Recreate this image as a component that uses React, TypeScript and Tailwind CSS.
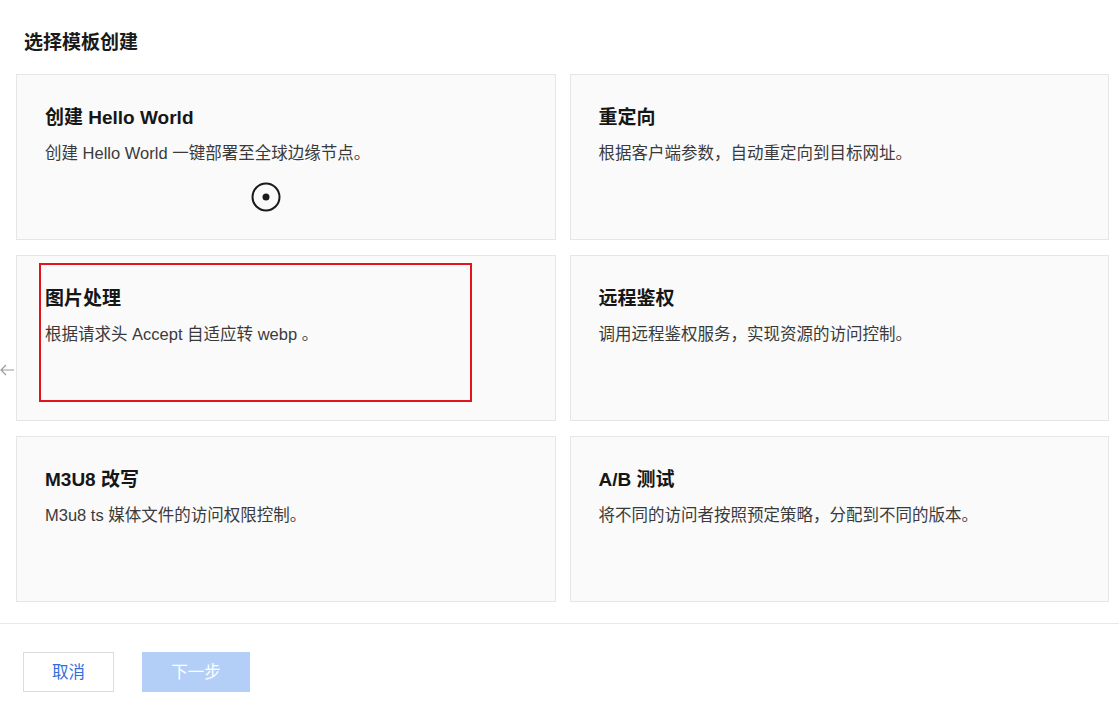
const templates = [
  { title: "创建 Hello World", desc: "创建 Hello World 一键部署至全球边缘节点。" },
  { title: "重定向", desc: "根据客户端参数，自动重定向到目标网址。" },
  { title: "图片处理", desc: "根据请求头 Accept 自适应转 webp 。" },
  { title: "远程鉴权", desc: "调用远程鉴权服务，实现资源的访问控制。" },
  { title: "M3U8 改写", desc: "M3u8 ts 媒体文件的访问权限控制。" },
  { title: "A/B 测试", desc: "将不同的访问者按照预定策略，分配到不同的版本。" },
];

function CursorRing() {
  return (
    <svg className="absolute left-[234px] top-[107px]" width="30" height="30" viewBox="0 0 30 30">
      <circle cx="15" cy="15" r="13.5" fill="none" stroke="#1a1a1a" strokeWidth="2" />
      <circle cx="15" cy="15" r="3.5" fill="#1a1a1a" />
    </svg>
  );
}

export default function App() {
  return (
    <div
      className="relative w-[1119px] h-[710px] overflow-hidden bg-white text-[#1f1f1f]"
      style={{ fontFamily: '"Liberation Sans", "Noto Sans CJK SC", sans-serif' }}
    >
      {/* drag arrow at the left edge */}
      <svg className="absolute left-0 top-[362px]" width="16" height="16" viewBox="0 0 16 16">
        <path d="M14 8H1M6 3L1 8l5 5" fill="none" stroke="#9a9a9a" strokeWidth="1.2" />
      </svg>

      <div className="pl-4 pr-[10px]">
        <h2 className="pl-2 pt-[31px] pb-[19px] text-[19px] leading-6 font-bold text-[#1a1a1a]">选择模板创建</h2>

        <div className="grid grid-cols-2 gap-x-[14px] gap-y-[15px]">
          {templates.map((t, i) => (
            <div
              key={t.title}
              className="relative h-[166px] border border-[#e6e6e6] bg-[#fafafa] px-[28px] pt-[30px]"
            >
              <div className="text-[19px] leading-[26px] font-bold text-[#161616]">{t.title}</div>
              <div className="mt-[11px] text-[16.5px] leading-[22px] text-[#3a3a3a]">{t.desc}</div>
              {i === 0 && <CursorRing />}
              {i === 2 && (
                <div className="absolute left-[22px] top-[7px] w-[433px] h-[139px] border-2 border-[#e3141c]" />
              )}
            </div>
          ))}
        </div>
      </div>

      <div className="mt-[21px] border-t border-[#e8e8e8]" />

      <div className="flex gap-[28px] pl-[23px] pt-[28px]">
        <button className="w-[91px] h-[40px] border border-[#dcdcdc] bg-white text-[16.5px] text-[#2f6fde]">
          取消
        </button>
        <button className="w-[108px] h-[40px] bg-[#b3cff8] text-[16.5px] text-white">下一步</button>
      </div>
    </div>
  );
}
